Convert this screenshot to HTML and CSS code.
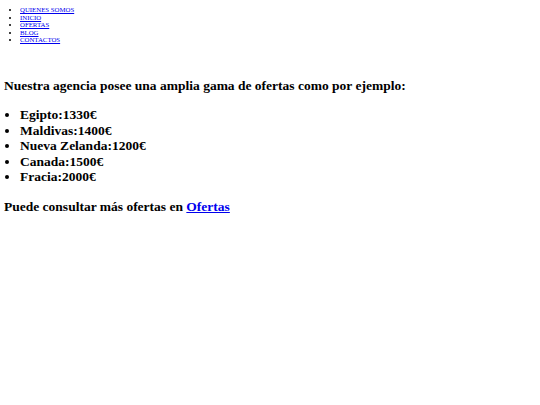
FILE: index.html
```html
<!DOCTYPE html>
<html lang="es">
<head>
<meta charset="utf-8">
<title>Agencia</title>
<link rel="stylesheet" href="styles.css">
</head>
<body>
<nav class="menu">
  <ul class="menu-list">
    <li><a href="#">QUIENES SOMOS</a></li>
    <li><a href="#">INICIO</a></li>
    <li><a href="#">OFERTAS</a></li>
    <li><a href="#">BLOG</a></li>
    <li><a href="#">CONTACTOS</a></li>
  </ul>
</nav>
<main class="content">
  <h2 class="title">Nuestra agencia posee una amplia gama de ofertas como por ejemplo:</h2>
  <ul class="offers">
    <li>Egipto:1330€</li>
    <li>Maldivas:1400€</li>
    <li>Nueva Zelanda:1200€</li>
    <li>Canada:1500€</li>
    <li>Fracia:2000€</li>
  </ul>
  <h2 class="more">Puede consultar más ofertas en <a href="#">Ofertas</a></h2>
</main>
</body>
</html>
```
FILE: styles.css
```css
html, body {
  background: #ffffff;
}
body {
  margin: 0 4px;
  padding-top: 6px;
  font-family: "Liberation Serif", "Times New Roman", serif;
  color: #000000;
}
a {
  color: #0000ee;
  text-decoration: underline;
}
.menu-list {
  margin: 0;
  padding-left: 16px;
  font-size: 6.8px;
  line-height: 7.5px;
}
.title, .more, .offers {
  font-size: 13.5px;
  line-height: 15.5px;
  font-weight: bold;
}
.title {
  margin: 34.75px 0 13.5px;
}
.offers {
  margin: 0;
  padding-left: 16px;
}
.more {
  margin: 14.5px 0 0;
}
```
